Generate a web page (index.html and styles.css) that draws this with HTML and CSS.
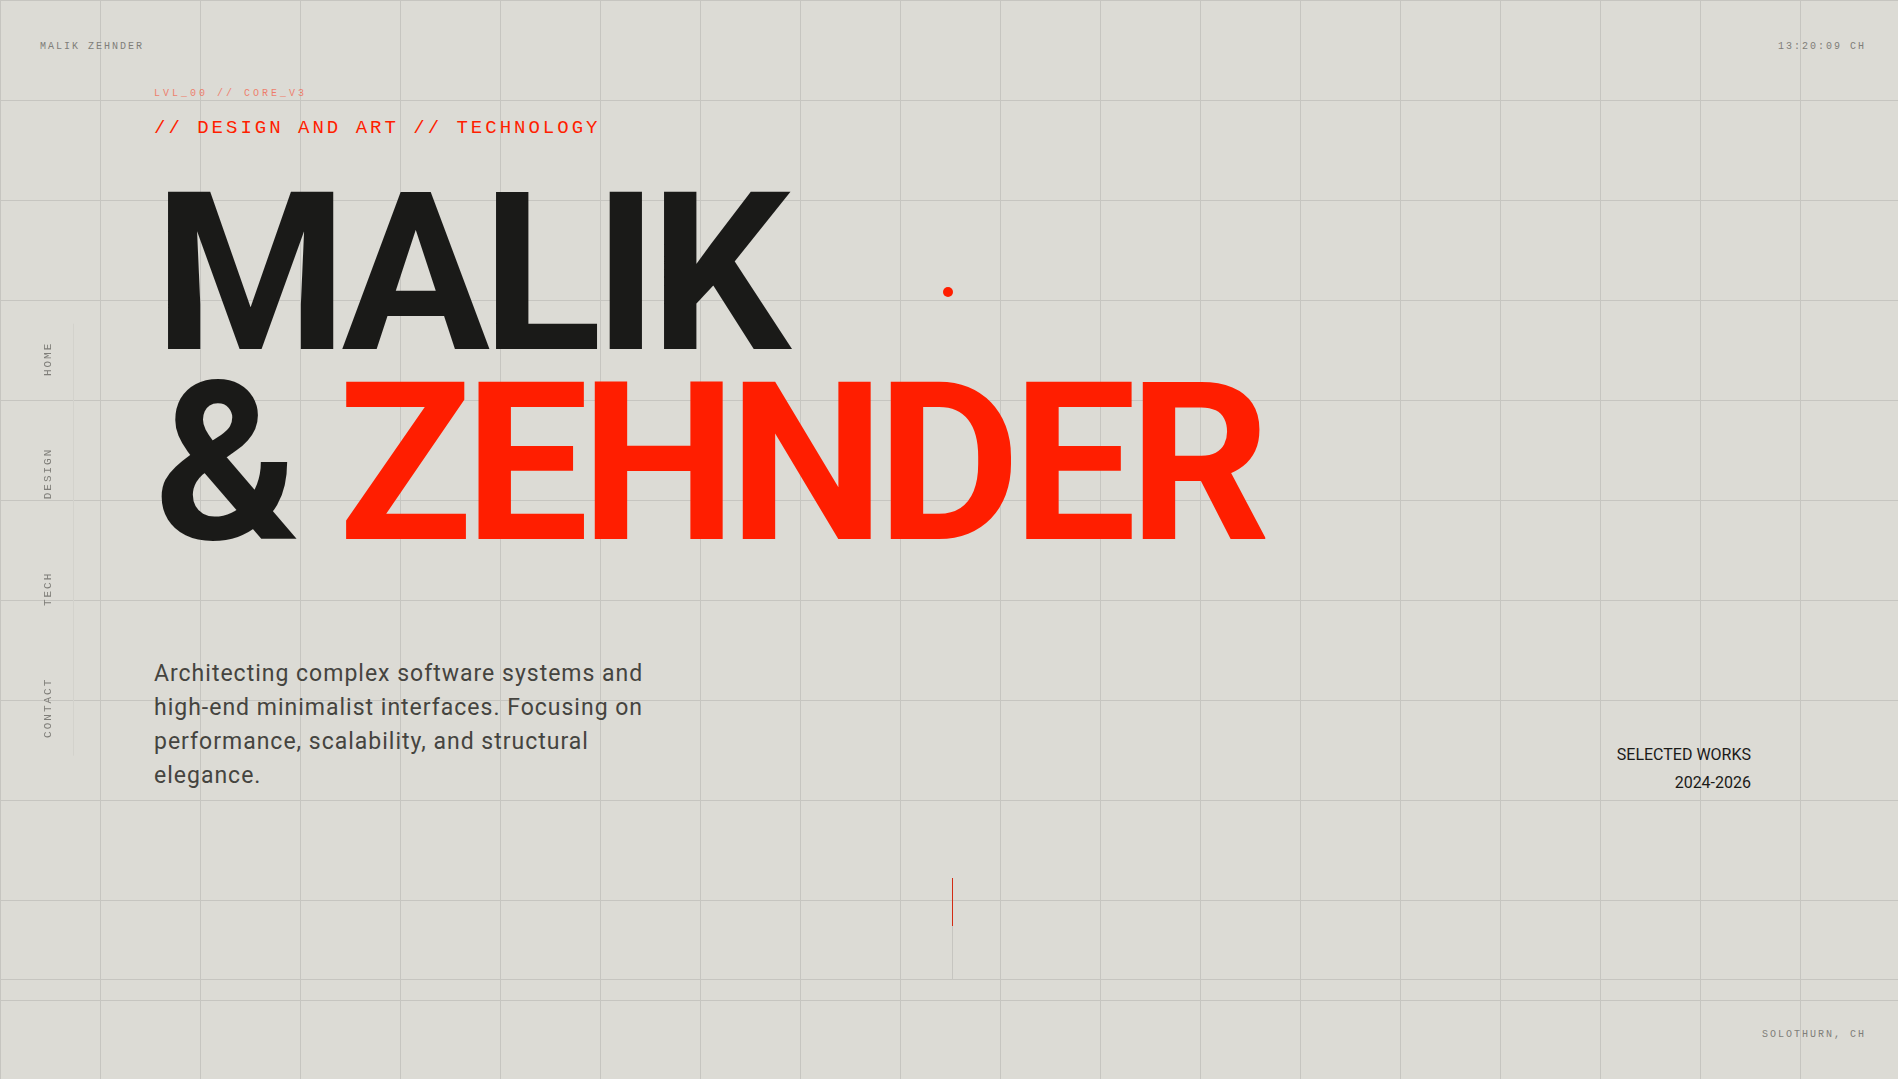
FILE: index.html
```html
<!DOCTYPE html>
<html lang="en">
  <head>
    <meta charset="utf-8">
    <meta name="viewport" content="width=device-width, initial-scale=1">
    <title>Malik Zehnder</title>
    <link rel="stylesheet" href="styles.css">
  </head>
  <body>
    <header class="bar top">
      <span>MALIK ZEHNDER</span>
      <time>13:20:09 CH</time>
    </header>

    <nav class="side">
      <a href="#home">HOME</a>
      <a href="#design">DESIGN</a>
      <a href="#tech">TECH</a>
      <a href="#contact">CONTACT</a>
    </nav>

    <main class="hero" id="home">
      <p class="level">LVL_00 // CORE_V3</p>
      <p class="tagline">// DESIGN AND ART // TECHNOLOGY</p>
      <h1 class="title">MALIK<br>&amp; <span class="accent">ZEHNDER</span></h1>
      <div class="info">
        <p class="intro">Architecting complex software systems and high-end minimalist interfaces. Focusing on performance, scalability, and structural elegance.</p>
        <p class="works">SELECTED WORKS<br>2024-2026</p>
      </div>
      <div class="scroll"></div>
    </main>

    <footer class="bar bottom">
      <span>SOLOTHURN, CH</span>
    </footer>

    <div class="cursor"></div>
  </body>
</html>
```
FILE: styles.css
```css
* {
  box-sizing: border-box;
  margin: 0;
  padding: 0;
}

body {
  min-height: 100vh;
  display: flex;
  flex-direction: column;
  font-family: Roboto, "Liberation Sans", sans-serif;
  color: #1a1a18;
  background-color: #dcdbd5;
  background-image:
    linear-gradient(to right, #c6c5c0 1px, transparent 1px),
    linear-gradient(to bottom, #c6c5c0 1px, transparent 1px);
  background-size: 100px 100px;
}

/* corner labels */
.bar {
  display: flex;
  font-family: "Liberation Mono", monospace;
  font-size: 10px;
  line-height: 16px;
  letter-spacing: 2px;
  color: #7f7e79;
}

.top {
  justify-content: space-between;
  padding: 39px 32px 0 40px;
}

.bottom {
  justify-content: flex-end;
  padding: 47px 32px 36px;
}

/* vertical menu */
.side {
  position: fixed;
  top: 50%;
  left: 0;
  width: 74px;
  padding: 18px 0;
  display: flex;
  flex-direction: column;
  align-items: center;
  gap: 72px;
  transform: translateY(-50%);
  border-right: 1px solid #d3d2cc;
}

.side a {
  margin-left: 22px;
  writing-mode: vertical-rl;
  transform: rotate(180deg);
  font-family: "Liberation Mono", monospace;
  font-size: 11px;
  line-height: 16px;
  letter-spacing: 2px;
  color: #7f7e79;
  text-decoration: none;
}

.hero {
  flex: 1;
  display: flex;
  flex-direction: column;
  padding: 31px 147px 0 154px;
  border-bottom: 1px solid #c6c5c0;
}

.level,
.tagline {
  font-family: "Liberation Mono", monospace;
  letter-spacing: 3px;
  color: #ff1e00;
}

.level {
  font-size: 10px;
  line-height: 16px;
  opacity: 0.5;
}

.tagline {
  margin-top: 14px;
  font-size: 19px;
  line-height: 24px;
}

.title {
  margin-top: 39px;
  font-size: 221px;
  font-weight: 700;
  line-height: 190px;
  letter-spacing: -8px;
}

.accent {
  color: #ff1e00;
}

.info {
  display: flex;
  justify-content: space-between;
  align-items: flex-end;
  margin-top: 98px;
}

.intro {
  max-width: 500px;
  padding-bottom: 4px;
  font-size: 23px;
  line-height: 34px;
  letter-spacing: 1px;
  color: #45443f;
}

.works {
  font-size: 16px;
  line-height: 28px;
  text-align: right;
}

.scroll {
  align-self: center;
  width: 1px;
  height: 101px;
  margin-top: auto;
  background: linear-gradient(to bottom, #d22c14 48px, #c6c5c0 48px);
}

.cursor {
  position: fixed;
  top: 287px;
  left: 943px;
  width: 10px;
  height: 10px;
  border-radius: 50%;
  background: #ff1e00;
  pointer-events: none;
}
```
